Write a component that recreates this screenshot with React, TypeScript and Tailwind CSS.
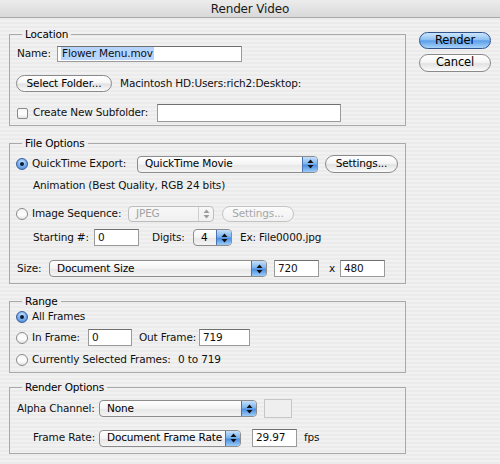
import type { ReactNode } from "react";

const FONT = "font-['DejaVu_Sans',_'Liberation_Sans',_sans-serif]";

function Radio({ checked = false }: { checked?: boolean }) {
  return checked ? (
    <span className="flex h-[12px] w-[12px] shrink-0 items-center justify-center rounded-full border border-[#3a5f9c] bg-[radial-gradient(circle_at_50%_35%,#d6ecff_0%,#6fa8ea_55%,#3f7fd6_100%)]">
      <span className="h-[4px] w-[4px] rounded-full bg-[#0d1a33]" />
    </span>
  ) : (
    <span className="h-[12px] w-[12px] shrink-0 rounded-full border border-[#8a8a8a] bg-[linear-gradient(#f4f4f4,#ffffff_60%,#e2e2e2)]" />
  );
}

function Checkbox() {
  return (
    <span className="h-[11px] w-[11px] shrink-0 rounded-[2px] border border-[#8a8a8a] bg-[linear-gradient(#f6f6f6,#ffffff_55%,#e4e4e4)]" />
  );
}

function Arrows({ disabled = false }: { disabled?: boolean }) {
  const fill = disabled ? "#9c9c9c" : "#111";
  return (
    <svg width="7" height="10" viewBox="0 0 7 10">
      <path d="M3.5 0.5 L6.5 4 L0.5 4 Z" fill={fill} />
      <path d="M3.5 9.5 L6.5 6 L0.5 6 Z" fill={fill} />
    </svg>
  );
}

function Popup({
  value,
  className,
  disabled = false,
}: {
  value: string;
  className: string;
  disabled?: boolean;
}) {
  return (
    <div
      className={`flex shrink-0 overflow-hidden rounded-[4px] border ${
        disabled
          ? "border-[#bdbdbd] bg-[linear-gradient(#f7f7f7,#f0f0f0)] text-[#a2a2a2]"
          : "border-[#8c8c8c] bg-[linear-gradient(#ffffff,#f3f3f3_50%,#e6e6e6_51%,#f4f4f4)] text-black"
      } ${className}`}
    >
      <span className="flex flex-1 items-center whitespace-nowrap pl-[7px]">{value}</span>
      <span
        className={`flex w-[15px] shrink-0 items-center justify-center border-l ${
          disabled
            ? "border-[#d0d0d0] bg-transparent"
            : "border-[#4a72b4] bg-[linear-gradient(#c4e0fb,#7db4ef_45%,#4b8fe3_55%,#9ccbf6)]"
        }`}
      >
        <Arrows disabled={disabled} />
      </span>
    </div>
  );
}

function TextInput({
  value = "",
  className,
  selected = false,
}: {
  value?: string;
  className: string;
  selected?: boolean;
}) {
  return (
    <div
      className={`flex shrink-0 items-center border border-[#9a9a9a] border-t-[#6f6f6f] bg-white pl-[3px] ${className}`}
    >
      {selected ? (
        <span className="bg-[#b5d5ff] px-[1px] leading-[13px]">{value}</span>
      ) : (
        <span>{value}</span>
      )}
    </div>
  );
}

function AquaButton({
  label,
  className,
  primary = false,
  disabled = false,
}: {
  label: string;
  className: string;
  primary?: boolean;
  disabled?: boolean;
}) {
  const look = primary
    ? "border-[#30528f] bg-[linear-gradient(#cde6fd,#8ec1f3_45%,#5b9ee9_52%,#a8d4fa)] text-black"
    : disabled
      ? "border-[#c4c4c4] bg-[linear-gradient(#fbfbfb,#f1f1f1)] text-[#a6a6a6]"
      : "border-[#8a8a8a] bg-[linear-gradient(#ffffff,#f5f5f5_45%,#e2e2e2_55%,#fbfbfb)] text-black";
  return (
    <div
      className={`flex shrink-0 items-center justify-center whitespace-nowrap rounded-full border ${look} ${className}`}
    >
      {label}
    </div>
  );
}

function Label({ children, className = "" }: { children: ReactNode; className?: string }) {
  return <span className={`shrink-0 whitespace-nowrap ${className}`}>{children}</span>;
}

function Group({
  title,
  className,
  children,
}: {
  title: string;
  className: string;
  children: ReactNode;
}) {
  return (
    <fieldset className={`border border-[#a9a9a9] px-[7px] ${className}`}>
      <legend className="ml-[5px] px-[3px] leading-[14px] text-black">{title}</legend>
      {children}
    </fieldset>
  );
}

export default function App() {
  return (
    <div
      className={`h-[464px] w-[500px] overflow-hidden bg-[repeating-linear-gradient(0deg,#ebebeb_0px,#ebebeb_2px,#f1f1f1_2px,#f1f1f1_4px)] text-[10.5px] tracking-[-0.15px] text-[#111] ${FONT}`}
    >
      <div className="flex h-[18px] items-center justify-center border-b border-[#a8a8a8] bg-[linear-gradient(#ececec,#d9d9d9)] text-[12px] text-[#1a1a1a]">
        Render Video
      </div>

      <div className="flex">
        <div className="ml-[9px] flex w-[397px] flex-col">
          <Group title="Location" className="mt-[9px] pb-[3px]">
            <div className="mt-[4px] flex h-[17px] items-center">
              <Label className="w-[40px]">Name:</Label>
              <TextInput value="Flower Menu.mov" selected className="h-[16px] w-[185px]" />
            </div>
            <div className="mt-[13px] flex h-[17px] items-center">
              <AquaButton label="Select Folder..." className="-ml-px h-[17px] w-[96px]" />
              <Label className="ml-[8px]">Macintosh HD:Users:rich2:Desktop:</Label>
            </div>
            <div className="mt-[12px] flex h-[18px] items-center">
              <Checkbox />
              <Label className="ml-[5px] w-[124px]">Create New Subfolder:</Label>
              <TextInput className="h-[18px] w-[184px]" />
            </div>
          </Group>

          <Group title="File Options" className="mt-[10px] pb-[6px]">
            <div className="mt-[5px] flex h-[18px] items-center">
              <span className="-ml-px flex items-center">
                <Radio checked />
              </span>
              <Label className="ml-[4px] w-[105px]">QuickTime Export:</Label>
              <Popup value="QuickTime Movie" className="h-[17px] w-[181px]" />
              <AquaButton label="Settings..." className="ml-[7px] h-[18px] w-[73px]" />
            </div>
            <div className="mt-[6px] flex h-[14px] items-center whitespace-nowrap pl-[16px]">
              Animation (Best Quality, RGB 24 bits)
            </div>
            <div className="mt-[13px] flex h-[16px] items-center">
              <span className="-ml-px flex items-center">
                <Radio />
              </span>
              <Label className="ml-[4px] w-[96px]">Image Sequence:</Label>
              <Popup value="JPEG" disabled className="h-[16px] w-[86px]" />
              <AquaButton label="Settings..." disabled className="ml-[8px] h-[16px] w-[72px]" />
            </div>
            <div className="mt-[7px] flex h-[17px] items-center pl-[16px]">
              <Label className="w-[61px]">Starting #:</Label>
              <TextInput value="0" className="h-[17px] w-[45px]" />
              <Label className="ml-[13px] w-[41px]">Digits:</Label>
              <Popup value="4" className="h-[17px] w-[39px]" />
              <Label className="ml-[8px]">Ex: File0000.jpg</Label>
            </div>
            <div className="mt-[14px] flex h-[17px] items-center">
              <Label className="w-[32px]">Size:</Label>
              <Popup value="Document Size" className="h-[17px] w-[218px]" />
              <TextInput value="720" className="ml-[7px] h-[17px] w-[45px]" />
              <Label className="ml-[10px] w-[11px]">x</Label>
              <TextInput value="480" className="h-[17px] w-[45px]" />
            </div>
          </Group>

          <Group title="Range" className="mt-[10px] pb-[5px]">
            <div className="mt-[2px] flex h-[14px] items-center">
              <span className="-ml-px flex items-center">
                <Radio checked />
              </span>
              <Label className="ml-[4px]">All Frames</Label>
            </div>
            <div className="mt-[5px] flex h-[17px] items-center">
              <span className="-ml-px flex items-center">
                <Radio />
              </span>
              <Label className="ml-[4px] w-[56px]">In Frame:</Label>
              <TextInput value="0" className="h-[17px] w-[44px]" />
              <Label className="ml-[7px] w-[60px]">Out Frame:</Label>
              <TextInput value="719" className="h-[17px] w-[51px]" />
            </div>
            <div className="mt-[7px] flex h-[14px] items-center">
              <span className="-ml-px flex items-center">
                <Radio />
              </span>
              <Label className="ml-[4px] w-[146px]">Currently Selected Frames:</Label>
              <Label>0 to 719</Label>
            </div>
          </Group>

          <Group title="Render Options" className="mt-[7px] pb-[6px]">
            <div className="mt-[5px] flex h-[19px] items-center">
              <Label className="w-[82px]">Alpha Channel:</Label>
              <Popup value="None" className="h-[17px] w-[158px]" />
              <span className="ml-[7px] h-[19px] w-[28px] shrink-0 border border-[#c6c6c6] bg-[#efefef]" />
            </div>
            <div className="mt-[11px] flex h-[18px] items-center pl-[16px]">
              <Label className="w-[66px]">Frame Rate:</Label>
              <Popup value="Document Frame Rate" className="h-[17px] w-[142px]" />
              <TextInput value="29.97" className="ml-[11px] h-[18px] w-[45px]" />
              <Label className="ml-[7px]">fps</Label>
            </div>
          </Group>
        </div>

        <div className="ml-[13px] mt-[14px] flex flex-col">
          <AquaButton label="Render" primary className="h-[17px] w-[72px] text-[11.5px]" />
          <AquaButton label="Cancel" className="mt-[5px] h-[18px] w-[72px] text-[11.5px]" />
        </div>
      </div>
    </div>
  );
}
